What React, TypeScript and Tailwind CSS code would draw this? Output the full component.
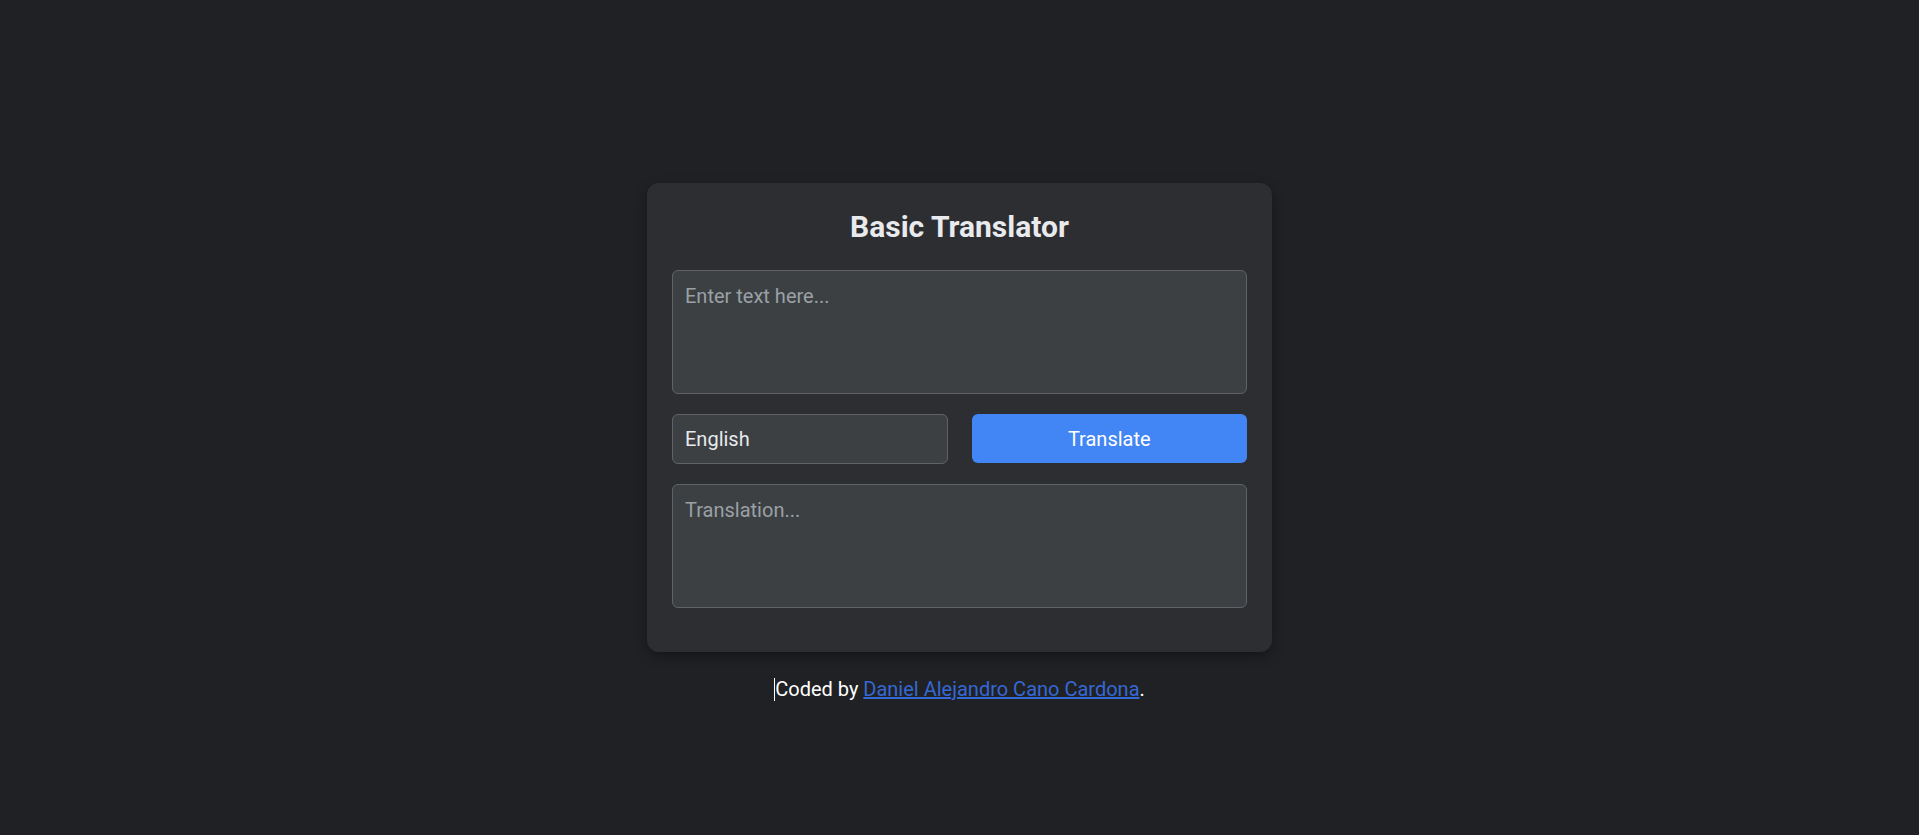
import React from "react";

export default function App() {
  return (
    <div
      className="grid h-[835px] w-full grid-rows-[1fr_auto_1fr] bg-[#202124] text-[#e8eaed]"
      style={{ fontFamily: "Roboto, 'Noto Sans', Arial, sans-serif" }}
    >
      <div />
      <div className="flex justify-center">
        <div className="w-[625px] rounded-xl bg-[#2d2e31] px-[25px] pt-[25px] pb-[44px] shadow-[0_4px_12px_rgba(0,0,0,0.35)]">
          <h1 className="mb-[25px] pt-[1px] text-center text-[30px] font-bold leading-[36px] text-[#e8eaed]">
            Basic Translator
          </h1>
          <textarea
            placeholder="Enter text here..."
            className="mb-5 block h-[124px] w-full resize-none rounded-md border border-[#5f6368] bg-[#3c4043] px-3 py-3 text-[20px] leading-[26px] text-[#e8eaed] outline-none placeholder:text-[#9aa0a6]"
          />
          <div className="mb-5 grid grid-cols-2 gap-6">
            <select className="h-[50px] w-full appearance-none rounded-md border border-[#5f6368] bg-[#3c4043] px-3 text-[20px] text-[#e8eaed] outline-none">
              <option>English</option>
            </select>
            <button className="h-[49px] w-full rounded-md bg-[#4285f4] text-[20px] text-white">
              Translate
            </button>
          </div>
          <textarea
            placeholder="Translation..."
            readOnly
            className="block h-[124px] w-full resize-none rounded-md border border-[#5f6368] bg-[#3c4043] px-3 py-3 text-[20px] leading-[26px] text-[#e8eaed] outline-none placeholder:text-[#9aa0a6]"
          />
        </div>
      </div>
      <div className="flex justify-center pt-[26px]">
        <p className="text-[20px] leading-[23px] text-white">
          <span className="inline-block h-[23px] w-px bg-white align-top" />
          Coded by{" "}
          <a href="#" className="text-[#3568d4] underline">
            Daniel Alejandro Cano Cardona
          </a>
          .
        </p>
      </div>
    </div>
  );
}
